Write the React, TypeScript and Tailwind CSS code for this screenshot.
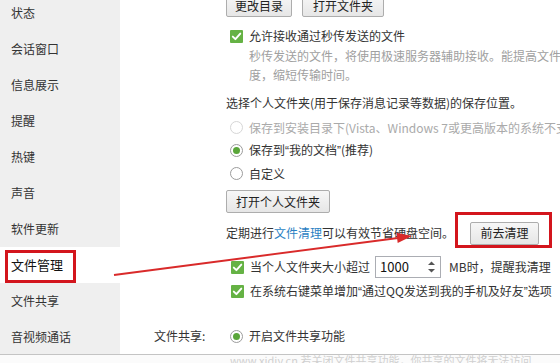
import React from "react"

const font = { fontFamily: '"Noto Sans CJK SC", "Microsoft YaHei", "Noto Sans", sans-serif' }

const navItems = ["状态", "会话窗口", "信息展示", "提醒", "热键", "声音", "软件更新", "文件管理", "文件共享", "音视频通话"]

// narrow curly quotes, as in the original UI font
function Q({ children }: { children: React.ReactNode }) {
  return <span className="font-['Liberation_Sans',sans-serif]">{children}</span>
}

function Check() {
  return (
    <span className="w-[13px] h-[13px] shrink-0 bg-[#65b244] rounded-[1px] flex items-center justify-center">
      <svg width="11" height="11" viewBox="0 0 11 11">
        <path d="M1.8 5.6 L4.4 8.2 L9.3 2.6" fill="none" stroke="#fff" strokeWidth="1.9" strokeLinecap="round" strokeLinejoin="round" />
      </svg>
    </span>
  )
}

function Radio({ checked = false, disabled = false }: { checked?: boolean; disabled?: boolean }) {
  return (
    <span
      className={`w-[13px] h-[13px] shrink-0 rounded-full border bg-white flex items-center justify-center ${
        disabled ? "border-[#d6d6d6]" : "border-[#9c9c9c]"
      }`}
    >
      {checked && <span className="w-[7px] h-[7px] rounded-full bg-[#5aa63a]" />}
    </span>
  )
}

function Btn({ children, className = "" }: { children: React.ReactNode; className?: string }) {
  return (
    <button
      className={`h-[23px] shrink-0 border border-[#adadad] rounded-[2px] bg-gradient-to-b from-[#f7f7f7] to-[#e6e6e6] text-[12px] text-[#222] flex items-center justify-center ${className}`}
    >
      {children}
    </button>
  )
}

export default function App() {
  return (
    <div className="relative w-[560px] h-[363px] overflow-hidden bg-white text-[12px] text-[#333]" style={font}>
      <div className="flex h-[355px] border-b border-[#c4c4c4] shadow-[0_1px_2px_rgba(0,0,0,0.15)] overflow-hidden">
        {/* Sidebar */}
        <aside className="w-[120px] shrink-0 bg-[#efefef] flex flex-col">
          <div className="-mt-[5px]">
            {navItems.map((item) => (
              <div
                key={item}
                className={`h-[36px] pl-[11px] flex items-center ${item === "文件管理" ? "bg-white text-[#111] text-[13px]" : ""}`}
              >
                {item}
              </div>
            ))}
          </div>
        </aside>

        {/* Content */}
        <main className="flex-1 overflow-hidden whitespace-nowrap">
          <div className="pl-[106px]">
            <div className="flex gap-[10px] -mt-[6px]">
              <Btn className="w-[66px]">更改目录</Btn>
              <Btn className="w-[82px]">打开文件夹</Btn>
            </div>

            <div className="mt-[9px] h-[20px] pl-[4px] flex items-center gap-[6px]">
              <Check />
              <span>允许接收通过秒传发送的文件</span>
            </div>
            <div className="pl-[23px] text-[#a0a0a0] leading-[19px]">
              <div>秒传发送的文件，将使用极速服务器辅助接收。能提高文件传输速</div>
              <div>度，缩短传输时间。</div>
            </div>

            <div className="mt-[9px] h-[20px] flex items-center">选择个人文件夹(用于保存消息记录等数据)的保存位置。</div>

            <div className="mt-[3px] flex flex-col">
              <div className="h-[23px] pl-[4px] flex items-center gap-[6px] text-[#aaaaaa]">
                <Radio disabled />
                <span>保存到安装目录下(Vista、Windows 7或更高版本的系统不支持)</span>
              </div>
              <div className="h-[23px] pl-[4px] flex items-center gap-[6px]">
                <Radio checked />
                <span>
                  保存到<Q>“</Q>我的文档<Q>”</Q>(推荐)
                </span>
              </div>
              <div className="h-[23px] pl-[4px] flex items-center gap-[6px]">
                <Radio />
                <span>自定义</span>
              </div>
            </div>

            <div className="mt-[5px]">
              <Btn className="w-[104px]">打开个人文件夹</Btn>
            </div>

            <div className="mt-[9px] h-[22px] flex items-center">
              <span className="w-[244px]">
                定期进行<span className="text-[#2b7fc3]">文件清理</span>可以有效节省硬盘空间。
              </span>
              <Btn className="w-[69px] h-[21px]">前去清理</Btn>
            </div>

            <div className="mt-[12px] h-[22px] pl-[5px] flex items-center gap-[6px]">
              <Check />
              <span>当个人文件夹大小超过</span>
              <div className="ml-[-1px] w-[66px] h-[22px] border border-[#abadb3] bg-white flex items-center justify-between pl-[4px] pr-[4px]">
                <span className="text-[#111] text-[13px]">1000</span>
                <svg width="9" height="14" viewBox="0 0 9 14">
                  <path d="M1 5 L4.5 1.5 L8 5 Z" fill="#555" />
                  <path d="M1 9 L4.5 12.5 L8 9 Z" fill="#555" />
                </svg>
              </div>
              <span className="ml-[2px]">MB时，提醒我清理</span>
            </div>

            <div className="mt-[3px] h-[20px] pl-[5px] flex items-center gap-[6px]">
              <Check />
              <span>
                在系统右键菜单增加<Q>“</Q>通过QQ发送到我的手机及好友<Q>”</Q>选项
              </span>
            </div>
          </div>

          <div className="mt-[25px] pl-[34px] h-[20px] flex items-center">
            <span className="w-[76px]">文件共享:</span>
            <div className="flex items-center gap-[6px]">
              <Radio checked />
              <span>开启文件共享功能</span>
            </div>
          </div>
        </main>
      </div>

      {/* Faded strip below the window */}
      <div className="h-[8px] bg-[#fbfbfb] overflow-hidden relative">
        <div className="absolute left-[230px] -top-[3px] text-[11px] text-[#d0d0d0] whitespace-nowrap">
          www.xjdiy.cn 若关闭文件共享功能，你共享的文件将无法访问
        </div>
      </div>

      {/* Annotations */}
      <svg className="absolute inset-0 pointer-events-none" width="560" height="363" viewBox="0 0 560 363">
        <rect x="6.5" y="251.5" width="68" height="30" fill="none" stroke="#d3151d" strokeWidth="3" />
        <rect x="456.5" y="213.5" width="94" height="33" fill="none" stroke="#d3151d" strokeWidth="3" />
        <line x1="114" y1="275" x2="398" y2="238" stroke="#d92a2a" strokeWidth="1.8" />
        <polygon points="412,236 397.7,243 396.4,232.8" fill="#d92a2a" />
      </svg>
    </div>
  )
}
